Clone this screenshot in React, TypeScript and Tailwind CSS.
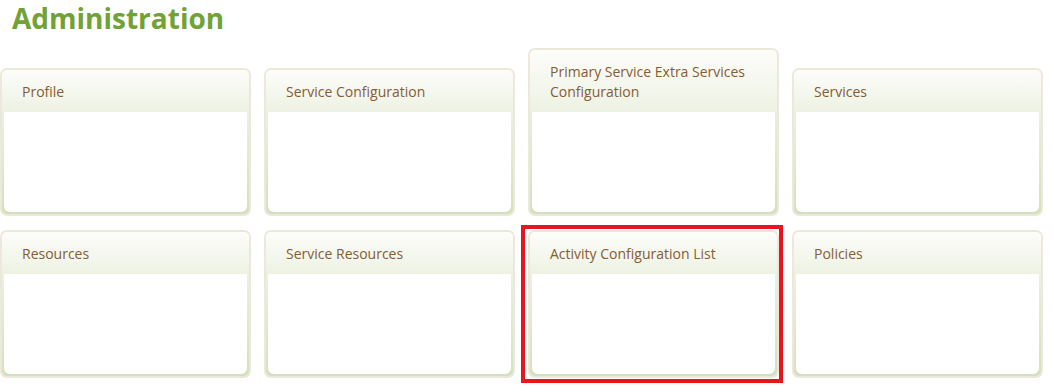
import React from 'react';

type Tile = { title: string; marked?: boolean };

const rows: Tile[][] = [
  [
    { title: 'Profile' },
    { title: 'Service Configuration' },
    { title: 'Primary Service Extra Services Configuration' },
    { title: 'Services' },
  ],
  [
    { title: 'Resources' },
    { title: 'Service Resources' },
    { title: 'Activity Configuration List', marked: true },
    { title: 'Policies' },
  ],
  [{ title: '' }, { title: '' }, { title: '' }, { title: '' }],
];

const Card = ({ tile }: { tile: Tile }) => (
  <div className="relative w-[251px] shrink-0">
    <div className="rounded-[7px] border-2 border-[#eee8dc] bg-gradient-to-b from-[#f6f8ef] to-[#d2e1bd] overflow-hidden">
      {/* header */}
      <div className="bg-gradient-to-b from-[#fdfdfa] to-[#edf2e3] pl-[20px] pr-[24px] pt-[12px] pb-[10px] text-[14px] leading-[20px] text-[#865c33]">
        {tile.title || '\u00a0'}
      </div>
      {/* body */}
      <div className="mx-[2px] mb-[2px] h-[100px] rounded-b-[6px] bg-white" />
    </div>
    {tile.marked && (
      <div className="absolute -left-[7px] -right-[4px] -top-[5px] -bottom-[5px] border-[4px] border-[#e9151e] pointer-events-none" />
    )}
  </div>
);

const App = () => {
  return (
    <div className="min-h-screen bg-white font-['Open_Sans',sans-serif] overflow-hidden">
      <h1 className="pl-[12px] text-[28px] leading-[36px] font-bold text-[#70a235]">Administration</h1>

      <div className="mt-[12px] flex flex-col gap-[14px]">
        {rows.map((row, i) => (
          <div key={i} className="flex items-end gap-[13px]">
            {row.map((tile, j) => (
              <Card key={j} tile={tile} />
            ))}
          </div>
        ))}
      </div>
    </div>
  );
};

export default App;
